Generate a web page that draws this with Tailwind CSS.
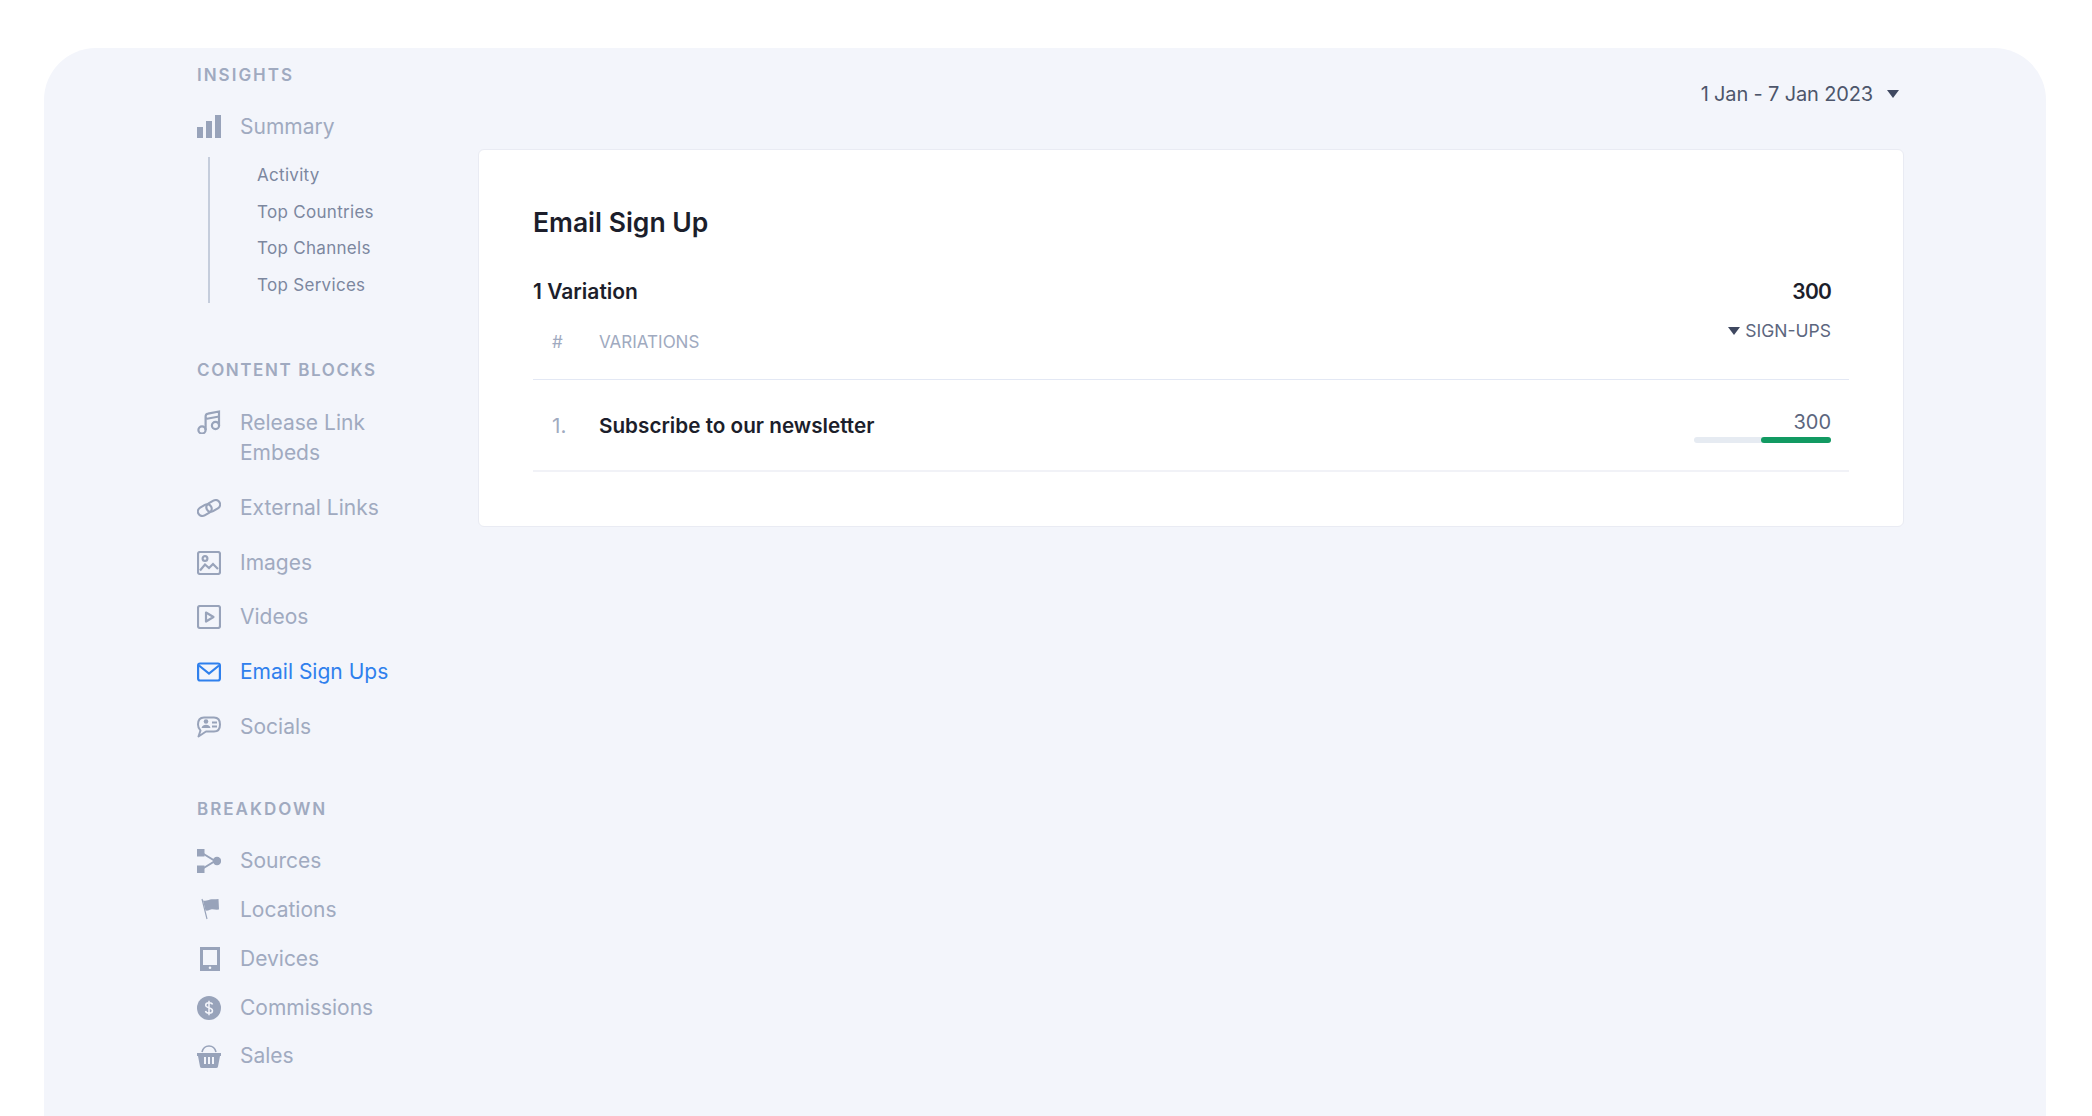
<!DOCTYPE html>
<html lang="en">
<head>
  <script src="https://cdn.jsdelivr.net/npm/@tailwindcss/browser@4"></script>
  <meta charset="UTF-8">
  <title>Email Sign Ups</title>
</head>
<body class="bg-white font-['Inter',sans-serif] overflow-hidden">
  <div class="h-[1116px] pt-12 pl-11 pr-[46px]">
    <div class="h-full bg-[#f3f5fb] rounded-t-[52px] flex pl-[153px] pr-[142px]">

      <!-- Sidebar -->
      <div class="w-[281px] shrink-0 text-[21px] text-[#a0aac0]">
        <div class="mt-[17px] h-5 leading-5 text-[17px] font-semibold tracking-[2px]">INSIGHTS</div>
        <div class="mt-[28px] flex items-center h-7">
          <svg class="w-6 h-6 mr-[19px]" viewBox="0 0 24 24" fill="#98a3ba"><rect y="12" width="6" height="11"/><rect x="9" y="6" width="6" height="17"/><rect x="18" y="0" width="6" height="23"/></svg>
          <span>Summary</span>
        </div>
        <div class="mt-4 ml-[11px] border-l-2 border-[#c5cddc] h-[146px] pl-[47px] pt-px text-[17px] tracking-[0.3px] text-[#7c879f]">
          <div class="h-[36.6px] leading-[34px]">Activity</div>
          <div class="h-[36.6px] leading-[34px]">Top Countries</div>
          <div class="h-[36.6px] leading-[34px]">Top Channels</div>
          <div class="h-[36.6px] leading-[34px]">Top Services</div>
        </div>

        <div class="mt-[57px] h-5 leading-5 text-[17px] font-semibold tracking-[1.6px]">CONTENT BLOCKS</div>
        <div class="mt-[28px] flex items-start">
          <svg class="w-6 h-6 mr-[19px] mt-[2px] shrink-0" viewBox="0 0 24 24" fill="none" stroke="#98a3ba" stroke-width="2.200"><circle cx="5" cy="20" r="3.6"/><circle cx="18.5" cy="15.5" r="3.6"/><path d="M8.6 20V6.500Q8.600 4 11 3.600L22 1.500V15.500M8.600 9L22 6.500"/></svg>
          <span class="w-[170px] leading-[30px]">Release Link Embeds</span>
        </div>
        <div class="mt-[26px] flex items-center h-7">
          <svg class="w-6 h-6 mr-[19px]" viewBox="0 0 24 24" fill="none" stroke="#98a3ba" stroke-width="2.200"><rect x="0.500" y="9.500" width="14.500" height="9" rx="4.500" transform="rotate(-30 8 14)"/><rect x="9" y="5.500" width="14.500" height="9" rx="4.500" transform="rotate(-30 16 10)"/></svg>
          <span>External Links</span>
        </div>
        <div class="mt-[27px] flex items-center h-7">
          <svg class="w-6 h-6 mr-[19px]" viewBox="0 0 24 24" fill="none" stroke="#98a3ba" stroke-width="2.200"><rect x="1" y="1" width="22" height="22" rx="2"/><circle cx="8" cy="7.500" r="2.400"/><path d="M3 19.500 8 13.500 12 17 16 13 21 18"/></svg>
          <span>Images</span>
        </div>
        <div class="mt-[26px] flex items-center h-7">
          <svg class="w-6 h-6 mr-[19px]" viewBox="0 0 24 24" fill="none" stroke="#98a3ba" stroke-width="2.200"><rect x="1" y="1" width="22" height="22" rx="2"/><path d="M9 7.500 16.500 12 9 16.500Z" stroke-linejoin="round"/></svg>
          <span>Videos</span>
        </div>
        <div class="mt-[27px] flex items-center h-7 text-[#2f80ed]">
          <svg class="w-6 h-6 mr-[19px]" viewBox="0 0 24 24" fill="none" stroke="#2f80ed" stroke-width="2.200"><rect x="1.100" y="3.500" width="21.800" height="17" rx="2"/><path d="M2 5.500 12 13.500 22 5.500"/></svg>
          <span>Email Sign Ups</span>
        </div>
        <div class="mt-[27px] flex items-center h-7">
          <svg class="w-6 h-6 mr-[19px]" viewBox="0 0 24 24" fill="none" stroke="#98a3ba" stroke-width="2"><path d="M7 2.500H17C21 2.500 23 5.500 23 9.500 23 14 20.500 16.500 17 16.500H9L1.500 21.500 3.500 15.500C1.800 14 1 12 1 9.500 1 5.500 3 2.500 7 2.500Z" stroke-linejoin="round"/><circle cx="9" cy="6.500" r="2.300" fill="#98a3ba" stroke="none"/><path d="M4.500 13C5 10.500 7 9.800 9 9.800 11 9.800 13 10.500 13.500 13Z" fill="#98a3ba" stroke="none"/><path d="M15 7.500H20M15 11.500H20"/></svg>
          <span>Socials</span>
        </div>

        <div class="mt-[58px] h-5 leading-5 text-[17px] font-semibold tracking-[2px]">BREAKDOWN</div>
        <div class="mt-[28px] flex items-center h-7">
          <svg class="w-6 h-6 mr-[19px]" viewBox="0 0 24 24" fill="#98a3ba"><rect x="0" y="0" width="7.500" height="7.500"/><rect x="0" y="16.500" width="7.500" height="7.500"/><circle cx="20" cy="12" r="4.200"/><path d="M5 4 18 12 5 20" fill="none" stroke="#98a3ba" stroke-width="2"/></svg>
          <span>Sources</span>
        </div>
        <div class="mt-[21px] flex items-center h-7">
          <svg class="w-6 h-6 mr-[19px]" viewBox="0 0 24 24" fill="#98a3ba"><path d="M5 1 10 21" fill="none" stroke="#98a3ba" stroke-width="1.200"/><path d="M6 2.500C9 3 11 2.500 13 1.500 15 1 18 1.500 21.500 1L22 11.500C19 12 16 11 14 11.500 12 12 11 13 8.500 12.500Z"/></svg>
          <span>Locations</span>
        </div>
        <div class="mt-[21px] flex items-center h-7">
          <svg class="w-6 h-6 mr-[19px]" viewBox="0 0 24 24" fill="#98a3ba"><path fill-rule="evenodd" d="M3 0H23V24H3ZM6 3V18H20V3ZM13 19.500A1.300 1.300 0 1 0 13 22.100 1.300 1.300 0 1 0 13 19.500Z"/></svg>
          <span>Devices</span>
        </div>
        <div class="mt-[21px] flex items-center h-7">
          <svg class="w-6 h-6 mr-[19px]" viewBox="0 0 24 24"><circle cx="12" cy="12" r="12" fill="#98a3ba"/><path d="M15.500 8.500C15 7 13.500 6.800 12 6.800 10 6.800 8.700 7.800 8.700 9.300 8.700 12.500 15.500 11 15.500 14.700 15.500 16.200 14 17.200 12 17.200 10.200 17.200 8.900 16.500 8.500 15M12 4.800V19.200" fill="none" stroke="#f3f5fb" stroke-width="1.500"/></svg>
          <span>Commissions</span>
        </div>
        <div class="mt-5 flex items-center h-7">
          <svg class="w-6 h-6 mr-[19px]" viewBox="0 0 24 24" fill="#98a3ba"><path d="M5 8C6 4 9 2 12 2 15 2 18 4 19 8" fill="none" stroke="#98a3ba" stroke-width="1.600"/><path fill-rule="evenodd" d="M0 9H24V12H23L21 22.500Q20.800 24 19 24H5Q3.200 24 3 22.500L1 12H0ZM7 13V20H9V13ZM11 13V20H13V13ZM15 13V20H17V13Z"/></svg>
          <span>Sales</span>
        </div>
      </div>

      <!-- Main -->
      <div class="flex-1 min-w-0">
        <div class="h-[101px] flex items-center justify-end pb-[9px] pr-[5px] text-[20px] tracking-[-0.15px] text-[#4d566b]">
          <span>1 Jan - 7 Jan 2023</span>
          <svg class="w-3 h-2 ml-[14px]" viewBox="0 0 12 8" fill="#3f4860"><path d="M0 0H12L6 8Z"/></svg>
        </div>
        <div class="h-[378px] bg-white border border-[#e9ebf3] rounded-[6px] pt-[56px] px-[54px]">
          <h2 class="text-[26.500px] leading-8 font-semibold text-[#1c1e2b]">Email Sign Up</h2>
          <div class="mt-[42px] flex justify-between pr-[18px] text-[21px] leading-6 font-semibold text-[#1c1e2b]">
            <span>1 Variation</span>
            <span class="tracking-[-0.8px]">300</span>
          </div>
          <div class="h-[76px] border-b border-[#e3e8f4] flex justify-between pl-[19px] pr-[18px] text-[17px] text-[#a0aac0]">
            <div class="flex items-start pt-[28px] leading-5">
              <span class="w-[47px]">#</span>
              <span>VARIATIONS</span>
            </div>
            <div class="flex items-start pt-[17px] leading-5 text-[17.500px] text-[#5c667e]">
              <svg class="w-3 h-2 mr-[5px] mt-[6px]" viewBox="0 0 12 8" fill="#3f4860"><path d="M0 0H12L6 8Z"/></svg>
              <span>SIGN-UPS</span>
            </div>
          </div>
          <div class="h-[92px] border-b-2 border-[#f1f2f7] flex items-center justify-between pl-[19px] pr-[18px]">
            <div class="flex items-center pt-px text-[20.700px]">
              <span class="w-[47px] text-[#a0aac0]">1.</span>
              <span class="font-semibold text-[#1c1e2b]">Subscribe to our newsletter</span>
            </div>
            <div class="w-[137px] pt-0.5 text-right">
              <div class="text-[20px] leading-6 text-[#5c667e]">300</div>
              <div class="mt-[3px] h-[6px] rounded-full bg-[#e6ebf2] flex justify-end">
                <div class="w-[70px] h-full rounded-full bg-[#129a62]"></div>
              </div>
            </div>
          </div>
        </div>
      </div>
    </div>
  </div>
</body>
</html>
